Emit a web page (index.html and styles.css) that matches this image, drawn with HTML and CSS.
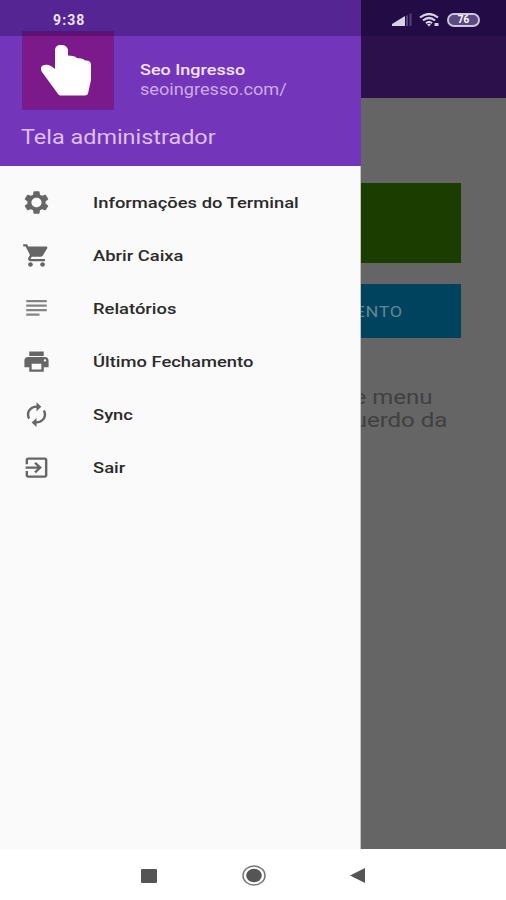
FILE: index.html
```
<!DOCTYPE html>
<html lang="pt-BR">
<head>
    <meta charset="UTF-8">
    <meta name="viewport" content="width=device-width, initial-scale=1.0">
    <title>Seo Ingresso</title>
    <link rel="stylesheet" href="styles.css">
</head>
<body>
    <div class="phone">
        <!-- Page behind the drawer -->
        <div class="page">
            <div class="toolbar"></div>
            <div class="content">
                <div class="button green"></div>
                <div class="button blue"><span class="wide">PAGAMENTO</span></div>
                <p class="hint"><span class="wide">Acesse menu</span><span class="wide">esquerdo da</span></p>
            </div>
        </div>

        <!-- Drawer -->
        <div class="drawer">
            <div class="header">
                <div class="profile">
                    <div class="logo">
                        <svg viewBox="0 0 52 52" width="52" height="52">
                            <path d="M14 6.500C14 3 16 1 20 1S27 3 27 6.500V11.500L32 12Q34.500 12.500 36 14L40 14.500Q43 15 44 16.500Q50 16 50 21V36L47 49.500Q46.500 51.500 44 51.500H20Q18 51.500 17 50L1 28Q-2 22.500 3 21Q6 20 10 22L14 25Z" fill="#fff"/>
                        </svg>
                    </div>
                    <div class="account">
                        <div class="name"><span class="wide">Seo Ingresso</span></div>
                        <div class="site"><span class="wide">seoingresso.com/</span></div>
                    </div>
                </div>
                <div class="role"><span class="wide">Tela administrador</span></div>
            </div>
            <ul class="menu">
                <li>
                    <svg class="icon" viewBox="0 0 24 24" preserveAspectRatio="none"><path d="M19.430 12.980c.04-.32.07-.64.07-.98s-.03-.66-.07-.98l2.110-1.650c.19-.15.24-.42.12-.64l-2-3.460c-.12-.22-.39-.3-.61-.22l-2.490 1c-.52-.4-1.080-.73-1.690-.98l-.38-2.650C14.460 2.180 14.250 2 14 2h-4c-.25 0-.46.18-.49.42l-.38 2.650c-.61.25-1.170.59-1.690.98l-2.490-1c-.23-.09-.49 0-.61.22l-2 3.460c-.13.22-.07.49.12.64l2.110 1.650c-.04.32-.07.65-.07.98s.03.66.07.98l-2.110 1.650c-.19.15-.24.42-.12.64l2 3.460c.12.22.39.3.61.22l2.490-1c.52.4 1.080.73 1.690.98l.38 2.650c.03.24.24.42.49.42h4c.25 0 .46-.18.49-.42l.38-2.650c.61-.25 1.170-.59 1.690-.98l2.490 1c.23.09.49 0 .61-.22l2-3.460c.12-.22.07-.49-.12-.64l-2.110-1.650zM12 16.200c-2.320 0-4.200-1.880-4.200-4.200s1.880-4.200 4.200-4.200 4.200 1.880 4.200 4.200-1.880 4.200-4.200 4.200z"/></svg>
                    <span class="wide">Informações do Terminal</span>
                </li>
                <li>
                    <svg class="icon" viewBox="0 0 24 24" preserveAspectRatio="none"><path d="M7 18c-1.100 0-1.990.9-1.990 2S5.900 22 7 22s2-.9 2-2-.9-2-2-2zM1 2v2h2l3.600 7.590-1.350 2.450c-.16.28-.25.61-.25.96 0 1.100.9 2 2 2h12v-2H7.420c-.14 0-.25-.11-.25-.25l.03-.12.9-1.630h7.450c.75 0 1.410-.41 1.750-1.030l3.580-6.490c.08-.14.12-.31.12-.48 0-.55-.45-1-1-1H5.210l-.94-2H1zm16 16c-1.100 0-1.990.9-1.990 2s.89 2 1.990 2 2-.9 2-2-.9-2-2-2z"/></svg>
                    <span class="wide">Abrir Caixa</span>
                </li>
                <li>
                    <svg class="icon light" viewBox="0 0 24 24" preserveAspectRatio="none"><path d="M3.500 4.500v2h17V4.500zM3.500 8.500v2h17V8.500zM3.500 12.500v2h17V12.500zM3.500 16.500v2h11V16.500z"/></svg>
                    <span class="wide">Relatórios</span>
                </li>
                <li>
                    <svg class="icon" viewBox="0 0 24 24" preserveAspectRatio="none"><path d="M19 8H5c-1.660 0-3 1.340-3 3v6h4v4h12v-4h4v-6c0-1.660-1.340-3-3-3zm-3 11H8v-5h8v5zm3-7c-.55 0-1-.45-1-1s.45-1 1-1 1 .45 1 1-.45 1-1 1zm-1-9H6v4h12V3z"/></svg>
                    <span class="wide">Último Fechamento</span>
                </li>
                <li>
                    <svg class="icon" viewBox="0 0 24 24" preserveAspectRatio="none"><path d="M12 6v3l4-4-4-4v3c-4.420 0-8 3.580-8 8 0 1.570.46 3.030 1.240 4.260L6.700 14.800c-.45-.83-.7-1.790-.7-2.800 0-3.310 2.690-6 6-6zm6.760 1.740L17.300 9.200c.44.84.7 1.790.7 2.800 0 3.310-2.690 6-6 6v-3l-4 4 4 4v-3c4.420 0 8-3.580 8-8 0-1.570-.46-3.030-1.240-4.260z"/></svg>
                    <span class="wide">Sync</span>
                </li>
                <li>
                    <svg class="icon" viewBox="0 0 24 24" preserveAspectRatio="none"><path d="M10.090 15.590L11.500 17l5-5-5-5-1.410 1.410L12.670 11H3v2h9.670l-2.580 2.590zM19 3H5c-1.110 0-2 .9-2 2v4h2V5h14v14H5v-4H3v4c0 1.100.89 2 2 2h14c1.100 0 2-.9 2-2V5c0-1.100-.9-2-2-2z"/></svg>
                    <span class="wide">Sair</span>
                </li>
            </ul>
        </div>

        <!-- Status bar -->
        <div class="status">
            <span class="clock">9:38</span>
            <div class="signals">
                <svg width="20" height="14" viewBox="0 0 20 14">
                    <path d="M0 13V11L13 3V13Z" fill="#d9cfe6"/>
                    <path d="M14 13V3L16 2V13ZM17.500 13V1L19.500 0V13Z" fill="#55427a"/>
                </svg>
                <svg width="21" height="14" viewBox="0 0 21 14">
                    <path d="M1 4.500Q10 -2.500 19 4.500M4 7.500Q10 2.500 16 7.500M7 10.200Q10 7.500 13 10.200" fill="none" stroke="#d9cfe6" stroke-width="2.200"/>
                    <path d="M8 11.500L10 13.500 12 11.500Q10 10 8 11.500ZM15.500 10H19.500V13H15.500Z" fill="#d9cfe6"/>
                </svg>
                <div class="battery"><span>76</span></div>
            </div>
        </div>

        <!-- Android buttons -->
        <div class="navbar">
            <svg width="16" height="14" viewBox="0 0 16 14"><rect width="16" height="14" rx="1" fill="#555"/></svg>
            <svg width="24" height="21" viewBox="0 0 24 21">
                <ellipse cx="12" cy="10.500" rx="11" ry="9.500" fill="none" stroke="#777" stroke-width="1.500"/>
                <ellipse cx="12" cy="10.500" rx="7.800" ry="6.800" fill="#555"/>
            </svg>
            <svg width="15" height="15" viewBox="0 0 15 15"><path d="M0 7.500L15 0V15Z" fill="#555"/></svg>
        </div>
    </div>
</body>
</html>
```
FILE: styles.css
```
* {
    box-sizing: border-box;
    margin: 0;
    padding: 0;
}

body {
    font-family: Roboto, "Liberation Sans", sans-serif;
    background-color: #fff;
}

.phone {
    position: relative;
    width: 506px;
    height: 900px;
    overflow: hidden;
    display: flex;
    flex-direction: column;
}

/* Stretched lettering */
.wide {
    display: inline-block;
    white-space: nowrap;
    transform: scaleX(1.2);
    transform-origin: left center;
}

/* Dimmed page */
.page {
    height: 849px;
    background-color: #656565;
}

.toolbar {
    height: 98px;
    background-color: #2b104b;
}

.content {
    display: flex;
    flex-direction: column;
    padding: 85px 45px 0;
}

.button {
    display: flex;
    align-items: center;
    justify-content: flex-end;
}

.button.green {
    height: 80px;
    background-color: #1c3d00;
}

.button.blue {
    height: 54px;
    margin-top: 21px;
    padding: 2px 58px 0 0;
    background-color: #00435f;
    color: #628592;
    font-size: 15px;
    letter-spacing: 0.5px;
}

.button .wide,
.hint .wide {
    transform-origin: right center;
}

.hint {
    display: flex;
    flex-direction: column;
    align-items: flex-end;
    margin-top: 48px;
    padding-right: 14px;
    font-size: 20px;
    line-height: 23px;
    color: #404040;
}

.hint .wide:first-child {
    margin-right: 14px;
}

/* Drawer */
.drawer {
    position: absolute;
    top: 0;
    left: 0;
    width: 361px;
    height: 849px;
    background-color: #fafafa;
    border-right: 1px solid #c4c4c4;
}

.header {
    width: 361px;
    height: 166px;
    padding: 31px 22px 0;
    background-color: #7335b9;
}

.profile {
    display: flex;
    gap: 26px;
}

.logo {
    width: 92px;
    height: 79px;
    padding: 12px 0 0 18px;
    background-color: #7c1a8c;
    border: 1px solid #652597;
}

.account {
    padding-top: 29px;
    line-height: 20px;
}

.name {
    font-size: 15px;
    font-weight: 500;
    color: #f3e4fa;
}

.site {
    font-size: 16px;
    color: #cfaae6;
}

.site .wide {
    transform: scaleX(1.135);
}

.role {
    margin: 14px 0 0 -1px;
    font-size: 20px;
    line-height: 26px;
    color: #dfc0ef;
}

.role .wide {
    transform: scaleX(1.17);
}

.menu {
    list-style: none;
    padding-top: 10px;
}

.menu li {
    display: flex;
    align-items: center;
    height: 53px;
    padding: 1px 0 0 22px;
    font-size: 15px;
    font-weight: 500;
    color: #2b2b2b;
}

.menu .wide {
    transform: scaleX(1.225);
}

.icon {
    width: 29px;
    height: 27px;
    margin: -1px 42px 0 0;
    fill: #666;
}

.icon.light {
    fill: #858585;
}

/* Status bar */
.status {
    position: absolute;
    top: 0;
    left: 0;
    width: 506px;
    height: 36px;
    display: flex;
    justify-content: space-between;
    align-items: center;
    padding: 3px 26px 0 53px;
    background-color: rgba(15, 0, 60, 0.3);
}

.clock {
    font-size: 14px;
    font-weight: 700;
    color: #eee2f5;
    letter-spacing: 1.1px;
}

.signals {
    display: flex;
    align-items: center;
    gap: 7px;
}

.battery {
    width: 33px;
    height: 14px;
    padding: 0 7px;
    border: 2px solid #cfc5df;
    border-radius: 7px;
    background-color: #5b4a80;
    background-clip: padding-box;
    font-size: 10px;
    font-weight: 700;
    line-height: 10px;
    text-align: center;
    color: #fff;
}

/* Android buttons */
.navbar {
    height: 51px;
    display: flex;
    align-items: center;
    justify-content: space-between;
    padding: 2px 141px 0 141px;
    background-color: #fff;
}
```
